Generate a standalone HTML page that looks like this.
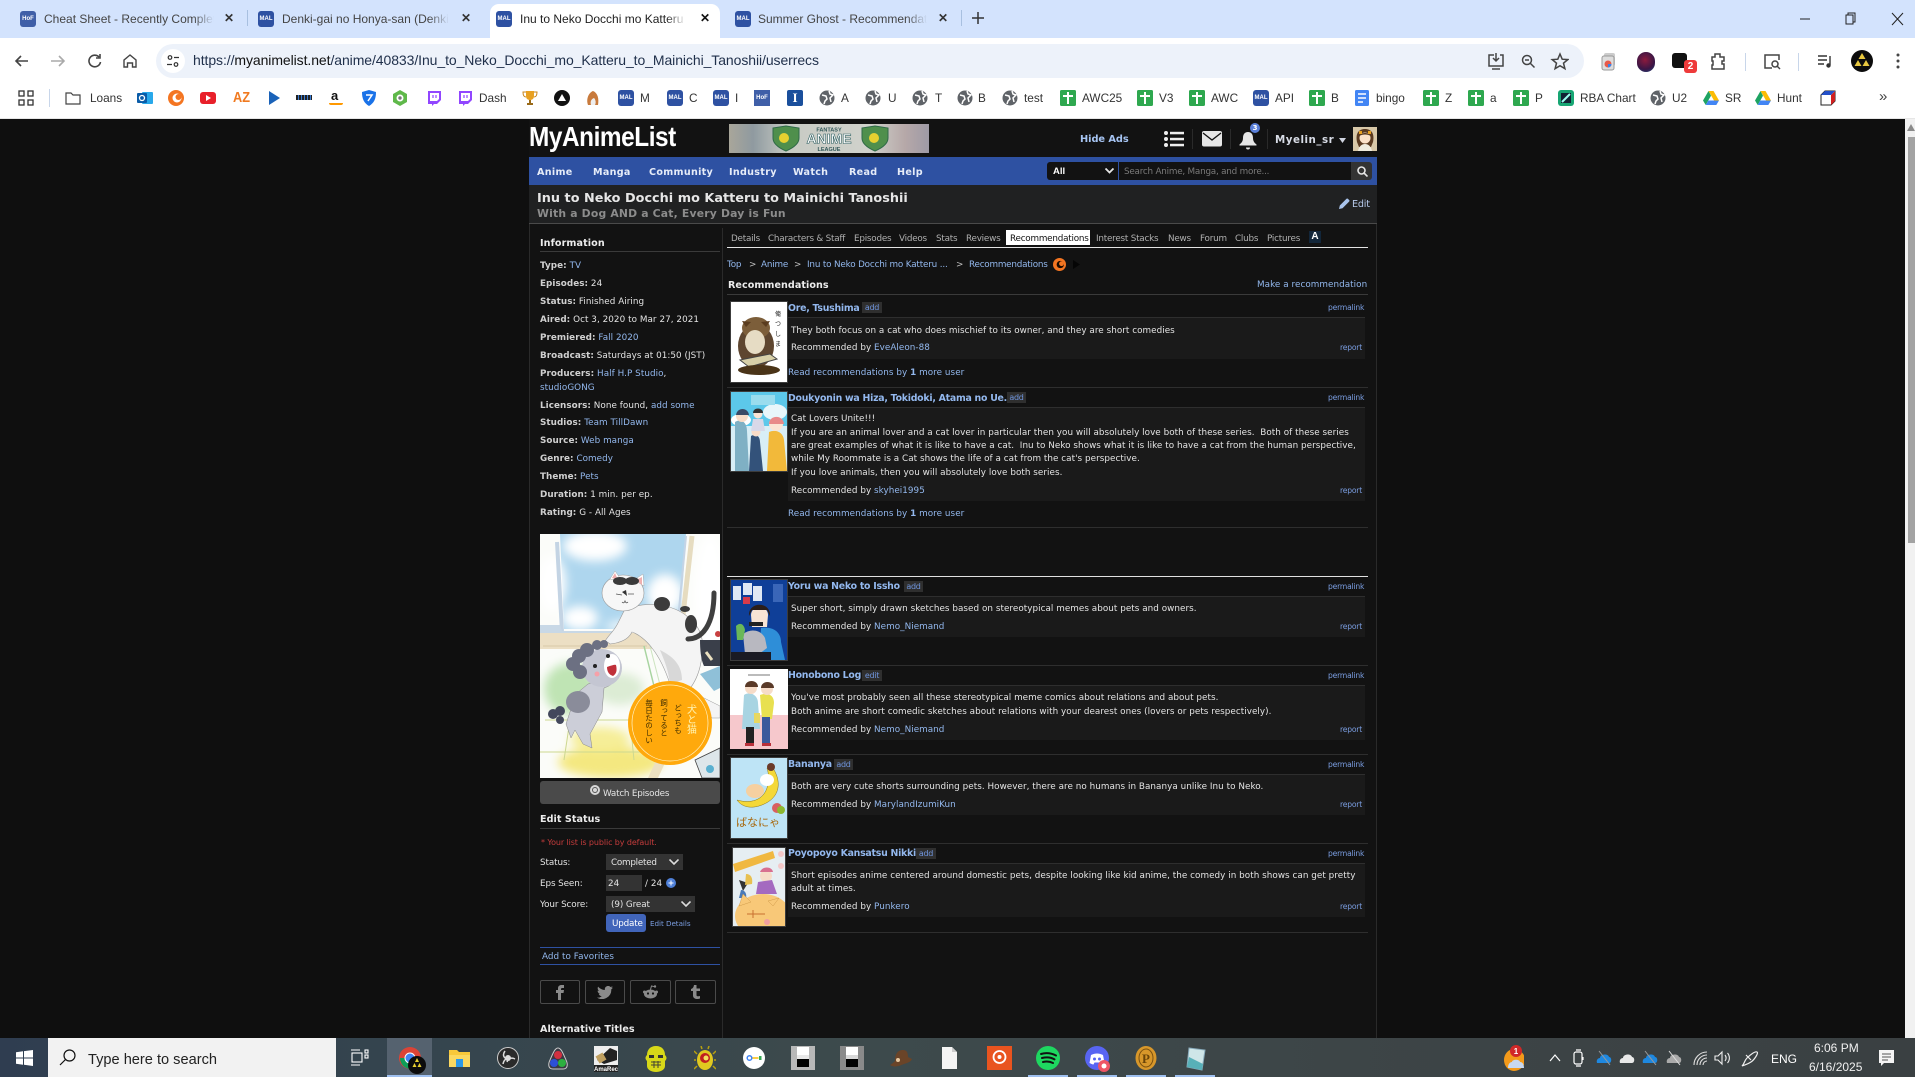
<!DOCTYPE html>
<html><head><meta charset="utf-8"><title>Inu to Neko Docchi mo Katteru to Mainichi Tanoshii - Recommendations</title>
<style>
html,body{margin:0;padding:0;width:1915px;height:1077px;overflow:hidden;background:#101010}
*{box-sizing:border-box}
.a{position:absolute}
.t{position:absolute;white-space:nowrap;line-height:14px;font-family:"DejaVu Sans","Liberation Sans",sans-serif;font-size:8.8px;color:#e4e4e4;letter-spacing:.05px;margin-top:1px}
.c{font-family:"Liberation Sans",sans-serif;letter-spacing:0;margin-top:0}
.l{color:#93b8ee}
.b{font-weight:bold}
.lb{font-weight:bold;color:#d0d0d0}
.tab{font-size:12px;color:#444;overflow:hidden;-webkit-mask-image:linear-gradient(90deg,#000 88%,transparent);mask-image:linear-gradient(90deg,#000 88%,transparent)}
.x{font-size:12px;color:#333;font-weight:bold}
.mal{position:absolute;background:#2e51a2;color:#fff;font:bold 6px/16px "Liberation Sans",sans-serif;width:16px;height:16px;text-align:center;border-radius:3px;letter-spacing:0}
.bk{font-size:11.800px;color:#333;top:91px}
.g{position:absolute;top:90px;width:16px;height:16px}
.sep{position:absolute;left:727px;width:641px;height:1px;background:#2e2e2e}
.box{position:absolute;left:788px;width:577px;background:#1a1a1a}
.ttl{font-weight:bold;font-size:9.400px;color:#93b8ee;left:788px;letter-spacing:-.25px;margin-top:2px}
.tag{position:absolute;height:11px;background:#2f2f2f;color:#6f94dc;font:8px/11px "DejaVu Sans",sans-serif;text-align:center;letter-spacing:-.3px}
.pl{left:1328px;font-size:7.600px;color:#7a9de0;letter-spacing:-.2px}
.rp{left:1340px;font-size:7.600px;color:#7a9de0;letter-spacing:-.2px}
.tx{left:791px;color:#e4e4e4;letter-spacing:.04px}
.tbt{color:#b0b0b0;top:231px;letter-spacing:-.22px}
.bc{letter-spacing:-.17px}
.hd{font-weight:bold;font-size:9.600px;color:#ececec;letter-spacing:.05px;margin-top:2px}
.thumb{position:absolute;overflow:hidden;border:1px solid #3c3c3c}
.sb{position:absolute;top:980px;height:24px;border:1px solid #4a4a4a;border-radius:2px}
.nv{font-weight:bold;font-size:9.600px;color:#e6ecf8;letter-spacing:.3px;top:165px}
</style></head><body>

<!-- chrome tab strip -->
<div class="a" style="left:0;top:0;width:1915px;height:38px;background:#d3e3fd"></div>
<div class="a" style="left:0;top:38px;width:1915px;height:81px;background:#fff"></div>
<div class="a" style="left:490px;top:4px;width:230px;height:34px;background:#fff;border-radius:9px 9px 0 0"></div>
<div class="a" style="left:247px;top:10px;width:1px;height:16px;background:#a8c0e0"></div>
<div class="a" style="left:961px;top:10px;width:1px;height:16px;background:#a8c0e0"></div>

<div class="mal" style="left:20px;top:11px;background:#3f5fa8;font-size:6px">HoF</div>
<div class="t c tab" style="left:44px;top:12px;width:170px">Cheat Sheet - Recently Completed</div>
<div class="t c x" style="left:224px;top:11px">✕</div>
<div class="mal" style="left:258px;top:11px">MAL</div>
<div class="t c tab" style="left:282px;top:12px;width:167px">Denki-gai no Honya-san (Denki-gai</div>
<div class="t c x" style="left:461px;top:11px">✕</div>
<div class="mal" style="left:496px;top:11px">MAL</div>
<div class="t c tab" style="left:520px;top:12px;width:166px;color:#1f1f1f">Inu to Neko Docchi mo Katteru to Mainichi</div>
<div class="t c x" style="left:700px;top:11px;color:#111">✕</div>
<div class="mal" style="left:735px;top:11px">MAL</div>
<div class="t c tab" style="left:758px;top:12px;width:169px">Summer Ghost - Recommendations</div>
<div class="t c x" style="left:938px;top:11px">✕</div>
<svg class="a" style="left:971px;top:11px" width="14" height="14" viewBox="0 0 14 14"><path d="M7 1v12M1 7h12" stroke="#333" stroke-width="1.500"/></svg>
<!-- window controls -->
<svg class="a" style="left:1798px;top:12px" width="106" height="14" viewBox="0 0 106 14" fill="none" stroke="#222" stroke-width="1"><path d="M2 7h10"/><rect x="48" y="3" width="7" height="9"/><path d="M50 3V1h7v9h-2"/><path d="M94 1l11 12M105 1L94 13"/></svg>

<!-- toolbar -->
<svg class="a" style="left:13px;top:52px" width="135" height="18" viewBox="0 0 135 18" fill="none" stroke-width="1.600"><path d="M15 9H3m5-5-5 5 5 5" stroke="#444"/><path d="M38 9h13m-5-5 5 5-5 5" stroke="#aaa"/><path d="M86 5a5.800 5.800 0 1 0 1.500 5M87 2v4h-4" stroke="#444"/><path d="M111 8l6-5 6 5v7h-3.500v-4h-5v4H111z" stroke="#444" stroke-width="1.400"/></svg>
<div class="a" style="left:156px;top:44px;width:1428px;height:34px;background:#edf2fa;border-radius:17px"></div>
<div class="a" style="left:161px;top:49px;width:24px;height:24px;background:#fff;border-radius:12px"></div>
<svg class="a" style="left:166px;top:54px" width="14" height="14" viewBox="0 0 14 14" fill="none" stroke="#333" stroke-width="1.200"><circle cx="4" cy="3.500" r="1.800"/><path d="M8 3.500h5M1 10.500h5"/><circle cx="10" cy="10.500" r="1.800"/></svg>
<div class="t c" style="left:193px;top:53px;font-size:14px;color:#1f2f4a;letter-spacing:-.08px">https://<span style="color:#111">myanimelist.net</span>/anime/40833/Inu_to_Neko_Docchi_mo_Katteru_to_Mainichi_Tanoshii/userrecs</div>
<svg class="a" style="left:1487px;top:52px" width="82" height="20" viewBox="0 0 82 20" fill="none" stroke="#444" stroke-width="1.500"><path d="M7 3H2v11h14V3h-3M9 1v8m-3-3 3 3 3-3M5 17h8"/><circle cx="40" cy="8" r="4.500"/><path d="M43.500 11.500l4 4M38 8h4"/><path d="M73 2l2.200 5.200 5.600.400-4.300 3.600 1.400 5.500-4.900-3-4.900 3 1.400-5.500-4.300-3.600 5.600-.400z"/></svg>
<!-- ext icons -->
<svg class="a" style="left:1600px;top:52px" width="18" height="20" viewBox="0 0 18 20"><rect x="4" y="1" width="11" height="13" rx="2" fill="#ccc"/><rect x="2" y="4" width="12" height="14" rx="2" fill="#ddd" stroke="#999"/><circle cx="8" cy="12" r="3.500" fill="#e8594a"/><path d="M8 12h3.500a3.500 3.500 0 0 1-3.500 3.500z" fill="#3b82e8"/></svg>
<div class="a" style="left:1637px;top:52px;width:18px;height:20px;border-radius:9px;background:radial-gradient(circle at 45% 40%,#8c1a3d,#3a1645 60%,#1b4a86)"></div>
<div class="a" style="left:1672px;top:53px;width:15px;height:15px;background:#111;border-radius:3px"></div>
<div class="a" style="left:1684px;top:60px;width:13px;height:13px;background:#ee3a3a;border-radius:3px;color:#fff;font:bold 10px/13px 'Liberation Sans',sans-serif;text-align:center">2</div>
<svg class="a" style="left:1710px;top:52px" width="16" height="19" viewBox="0 0 16 19" fill="none" stroke="#444" stroke-width="1.500"><path d="M2 5h3V2h5v3h4v4h-2v3h2v5H2v-4h1V9H2z"/></svg>
<div class="a" style="left:1745px;top:53px;width:1px;height:18px;background:#c8d6ea"></div>
<svg class="a" style="left:1763px;top:52px" width="18" height="20" viewBox="0 0 18 20" fill="none" stroke="#444" stroke-width="1.500"><path d="M16 8V3H2v13h7"/><circle cx="12" cy="12" r="3"/><path d="M14 14l3 3"/></svg>
<div class="a" style="left:1798px;top:53px;width:1px;height:18px;background:#c8d6ea"></div>
<svg class="a" style="left:1817px;top:54px" width="16" height="15" viewBox="0 0 16 15" fill="none" stroke="#333" stroke-width="1.400"><path d="M1 2h9M1 6h9M1 10h6M13 2v9"/><circle cx="11.500" cy="11.500" r="1.500" fill="#333"/></svg>
<svg class="a" style="left:1851px;top:50px" width="22" height="22" viewBox="0 0 22 22"><circle cx="11" cy="11" r="11" fill="#0c0c0c"/><path d="M11 3l3.500 6h-7zM7 10l3.500 6h-7zM15 10l3.500 6h-7z" fill="#e8c840"/></svg>
<svg class="a" style="left:1896px;top:53px" width="4" height="16" viewBox="0 0 4 16"><circle cx="2" cy="2" r="1.500" fill="#444"/><circle cx="2" cy="8" r="1.500" fill="#444"/><circle cx="2" cy="14" r="1.500" fill="#444"/></svg>

<!-- bookmarks -->
<svg class="g" style="left:18px" viewBox="0 0 16 16" fill="none" stroke="#333" stroke-width="1.300"><rect x="1" y="1" width="5" height="5"/><rect x="10" y="1" width="5" height="5"/><rect x="1" y="10" width="5" height="5"/><rect x="10" y="10" width="5" height="5"/></svg>
<div class="a" style="left:49px;top:89px;width:1px;height:18px;background:#c8d6ea"></div>
<svg class="g" style="left:65px" viewBox="0 0 16 16" fill="none" stroke="#444" stroke-width="1.200"><path d="M1 3h5l2 2h7v9H1z"/></svg>
<div class="t c bk" style="left:90px">Loans</div>
<svg class="g" style="left:137px" viewBox="0 0 16 16"><rect x="5" y="2" width="11" height="12" rx="1" fill="#28a8ea"/><rect y="3" width="10" height="10" rx="1" fill="#0a5ca8"/><circle cx="5" cy="8" r="2.500" fill="none" stroke="#fff" stroke-width="1.300"/></svg>
<svg class="g" style="left:168px" viewBox="0 0 16 16"><circle cx="8" cy="8" r="8" fill="#f47521"/><circle cx="9" cy="8" r="4.500" fill="#fff"/><circle cx="10.500" cy="7" r="3" fill="#f47521"/></svg>
<svg class="g" style="left:200px" viewBox="0 0 16 16"><rect y="2" width="16" height="12" rx="3" fill="#e8202a"/><path d="M6 5l5 3-5 3z" fill="#fff"/></svg>
<div class="t c b" style="left:233px;top:91px;font-size:15px;color:#f07a20;transform:scaleX(.85);transform-origin:left">AZ</div>
<svg class="g" style="left:266px" viewBox="0 0 16 16"><path d="M3 1l11 7-11 7z" fill="#1a62b8"/></svg>
<div class="a" style="left:296px;top:95px;width:16px;height:5px;background:repeating-linear-gradient(90deg,#222 0 2px,#3b7bd0 2px 3px)"></div>
<div class="t c b" style="left:331px;top:89px;font-size:13px;color:#111">a</div>
<div class="a" style="left:329px;top:103px;width:14px;height:2px;background:#f90;border-radius:0 0 8px 8px"></div>
<svg class="g" style="left:361px" viewBox="0 0 16 16"><path d="M8 0l7 2c0 7-2 11-7 14C3 13 1 9 1 2z" fill="#1a72e8"/><path d="M5 5h6L7 11" fill="none" stroke="#fff" stroke-width="1.500"/></svg>
<svg class="g" style="left:392px" viewBox="0 0 16 16"><path d="M8 0l7 4v8l-7 4-7-4V4z" fill="#5fb84a"/><circle cx="8" cy="8" r="3.500" fill="#fff"/><circle cx="8" cy="8" r="1.700" fill="#777"/></svg>
<svg class="g" style="left:426px" viewBox="0 0 16 16"><path d="M2 1h13v9l-4 4H8l-2 2v-2H2z" fill="#9146ff"/><path d="M4 3h9v6l-2 2H4z" fill="#fff"/><path d="M7 5v3M10 5v3" stroke="#9146ff" stroke-width="1.200"/></svg>
<svg class="g" style="left:457px" viewBox="0 0 16 16"><path d="M2 1h13v9l-4 4H8l-2 2v-2H2z" fill="#9146ff"/><path d="M4 3h9v6l-2 2H4z" fill="#fff"/><path d="M7 5v3M10 5v3" stroke="#9146ff" stroke-width="1.200"/></svg>
<div class="t c bk" style="left:479px">Dash</div>
<svg class="g" style="left:522px" viewBox="0 0 16 16"><path d="M4 1h8v5c0 3-2 4-4 4S4 9 4 6z" fill="#e8a020"/><path d="M4 2H1c0 3 1 5 3 5M12 2h3c0 3-1 5-3 5" fill="none" stroke="#c8851a"/><path d="M7 10h2v3h2v2H5v-2h2z" fill="#9a6a18"/></svg>
<svg class="g" style="left:554px" viewBox="0 0 16 16"><circle cx="8" cy="8" r="8" fill="#111"/><path d="M8 4l4 7H4z" fill="#fff"/></svg>
<svg class="g" style="left:585px" viewBox="0 0 16 16"><path d="M3 15c-2-5 0-12 5-14 5 2 6 8 5 14z" fill="#c87a3c"/><path d="M6 15c-1-3 0-6 3-7 2 2 2 5 1 7z" fill="#eee"/></svg>
<div class="mal" style="left:618px;top:90px">MAL</div><div class="t c bk" style="left:640px">M</div>
<div class="mal" style="left:667px;top:90px">MAL</div><div class="t c bk" style="left:689px">C</div>
<div class="mal" style="left:713px;top:90px">MAL</div><div class="t c bk" style="left:735px">I</div>
<div class="mal" style="left:754px;top:90px;background:#3f5fa8;border-radius:0">HoF</div>
<div class="a" style="left:787px;top:90px;width:16px;height:16px;background:#1a4f9c;color:#fff;font:bold 13px/16px 'Liberation Serif',serif;text-align:center;border-radius:2px">I</div>
<svg class="g" style="left:819px" viewBox="0 0 16 16"><circle cx="8" cy="8" r="7.500" fill="#5f6368"/><path d="M3 5l4 1 1 3-2 2-1 3M10 1l1 3 3 1-3 3 1 4" stroke="#fff" stroke-width="1.500" fill="none"/></svg><div class="t c bk" style="left:841px">A</div>
<svg class="g" style="left:865px" viewBox="0 0 16 16"><circle cx="8" cy="8" r="7.500" fill="#5f6368"/><path d="M3 5l4 1 1 3-2 2-1 3M10 1l1 3 3 1-3 3 1 4" stroke="#fff" stroke-width="1.500" fill="none"/></svg><div class="t c bk" style="left:888px">U</div>
<svg class="g" style="left:912px" viewBox="0 0 16 16"><circle cx="8" cy="8" r="7.500" fill="#5f6368"/><path d="M3 5l4 1 1 3-2 2-1 3M10 1l1 3 3 1-3 3 1 4" stroke="#fff" stroke-width="1.500" fill="none"/></svg><div class="t c bk" style="left:935px">T</div>
<svg class="g" style="left:957px" viewBox="0 0 16 16"><circle cx="8" cy="8" r="7.500" fill="#5f6368"/><path d="M3 5l4 1 1 3-2 2-1 3M10 1l1 3 3 1-3 3 1 4" stroke="#fff" stroke-width="1.500" fill="none"/></svg><div class="t c bk" style="left:978px">B</div>
<svg class="g" style="left:1002px" viewBox="0 0 16 16"><circle cx="8" cy="8" r="7.500" fill="#5f6368"/><path d="M3 5l4 1 1 3-2 2-1 3M10 1l1 3 3 1-3 3 1 4" stroke="#fff" stroke-width="1.500" fill="none"/></svg><div class="t c bk" style="left:1024px">test</div>
<svg class="g" style="left:1060px" viewBox="0 0 16 16"><rect width="16" height="16" rx="1.500" fill="#2ea84f"/><path d="M8 2v12M3 6h10" stroke="#fff" stroke-width="2"/></svg><div class="t c bk" style="left:1082px">AWC25</div>
<svg class="g" style="left:1137px" viewBox="0 0 16 16"><rect width="16" height="16" rx="1.500" fill="#2ea84f"/><path d="M8 2v12M3 6h10" stroke="#fff" stroke-width="2"/></svg><div class="t c bk" style="left:1159px">V3</div>
<svg class="g" style="left:1189px" viewBox="0 0 16 16"><rect width="16" height="16" rx="1.500" fill="#2ea84f"/><path d="M8 2v12M3 6h10" stroke="#fff" stroke-width="2"/></svg><div class="t c bk" style="left:1211px">AWC</div>
<div class="mal" style="left:1253px;top:90px">MAL</div><div class="t c bk" style="left:1275px">API</div>
<svg class="g" style="left:1309px" viewBox="0 0 16 16"><rect width="16" height="16" rx="1.500" fill="#2ea84f"/><path d="M8 2v12M3 6h10" stroke="#fff" stroke-width="2"/></svg><div class="t c bk" style="left:1331px">B</div>
<svg class="g" style="left:1354px" viewBox="0 0 16 16"><rect x="1" width="14" height="16" rx="1.500" fill="#4285f4"/><path d="M4 4h8M4 8h8M4 12h5" stroke="#fff" stroke-width="1.500"/></svg><div class="t c bk" style="left:1376px">bingo</div>
<svg class="g" style="left:1423px" viewBox="0 0 16 16"><rect width="16" height="16" rx="1.500" fill="#2ea84f"/><path d="M8 2v12M3 6h10" stroke="#fff" stroke-width="2"/></svg><div class="t c bk" style="left:1445px">Z</div>
<svg class="g" style="left:1468px" viewBox="0 0 16 16"><rect width="16" height="16" rx="1.500" fill="#2ea84f"/><path d="M8 2v12M3 6h10" stroke="#fff" stroke-width="2"/></svg><div class="t c bk" style="left:1490px">a</div>
<svg class="g" style="left:1513px" viewBox="0 0 16 16"><rect width="16" height="16" rx="1.500" fill="#2ea84f"/><path d="M8 2v12M3 6h10" stroke="#fff" stroke-width="2"/></svg><div class="t c bk" style="left:1535px">P</div>
<svg class="g" style="left:1558px" viewBox="0 0 16 16"><rect width="16" height="16" rx="3" fill="#17a673"/><rect x="3" y="3" width="10" height="10" fill="#123"/><path d="M4 12L12 4" stroke="#9fe" stroke-width="2"/></svg><div class="t c bk" style="left:1580px">RBA Chart</div>
<svg class="g" style="left:1650px" viewBox="0 0 16 16"><circle cx="8" cy="8" r="7.500" fill="#5f6368"/><path d="M3 5l4 1 1 3-2 2-1 3M10 1l1 3 3 1-3 3 1 4" stroke="#fff" stroke-width="1.500" fill="none"/></svg><div class="t c bk" style="left:1672px">U2</div>
<svg class="g" style="left:1703px" viewBox="0 0 16 16"><path d="M5.500 1h5L16 10.500h-5z" fill="#fbbc04"/><path d="M5.500 1L0 10.500 2.700 15 8 5.700z" fill="#1ea362"/><path d="M2.700 15h10.600L16 10.500H5.300z" fill="#4285f4"/></svg><div class="t c bk" style="left:1725px">SR</div>
<svg class="g" style="left:1755px" viewBox="0 0 16 16"><path d="M5.500 1h5L16 10.500h-5z" fill="#fbbc04"/><path d="M5.500 1L0 10.500 2.700 15 8 5.700z" fill="#1ea362"/><path d="M2.700 15h10.600L16 10.500H5.300z" fill="#4285f4"/></svg><div class="t c bk" style="left:1777px">Hunt</div>
<svg class="g" style="left:1820px" viewBox="0 0 16 16"><path d="M1 5l4-4h10v10l-4 4H1z" fill="#fff" stroke="#222"/><path d="M11 5v10l4-4V1z" fill="#d02020"/><path d="M1 5h10l4-4H5z" fill="#2450c8"/></svg>
<div class="t c" style="left:1879px;top:90px;font-size:15px;color:#444">»</div>

<!-- page -->
<div class="a" style="left:0;top:118px;width:1915px;height:1px;background:#e6e6e6"></div>
<div class="a" style="left:0;top:119px;width:1905px;height:919px;background:#0f0f0f"></div>
<div class="a" style="left:529px;top:119px;width:848px;height:919px;background:#121212"></div>
<div class="a" style="left:529px;top:224px;width:1px;height:814px;background:#2a2a2a"></div>
<div class="a" style="left:1376px;top:224px;width:1px;height:814px;background:#2a2a2a"></div>
<div class="a" style="left:722px;top:228px;width:1px;height:810px;background:#2a2a2a"></div>
<!-- scrollbar -->
<div class="a" style="left:1905px;top:119px;width:10px;height:919px;background:#f1f1f1"></div>
<svg class="a" style="left:1907px;top:124px" width="8" height="7"><path d="M4 0l4 7H0z" fill="#8a8a8a"/></svg>
<div class="a" style="left:1908px;top:137px;width:7px;height:406px;background:#a3a3a3"></div>

<!-- header -->
<div class="t c b" style="left:529px;top:121px;font-size:28px;line-height:32px;color:#fff;letter-spacing:-.5px;transform:scaleX(.87);transform-origin:left">MyAnimeList</div>
<svg class="a" style="left:729px;top:124px" width="200" height="29" viewBox="0 0 200 29"><defs><linearGradient id="fal" x1="0" x2="1"><stop offset="0" stop-color="#a9a69a"/><stop offset=".12" stop-color="#8f9aa0"/><stop offset=".3" stop-color="#c8cbc4"/><stop offset=".7" stop-color="#d0d2cc"/><stop offset=".88" stop-color="#b6a8a8"/><stop offset="1" stop-color="#9e9aa6"/></linearGradient></defs><rect width="200" height="29" fill="url(#fal)"/><path d="M44 4l13-2 13 2v10c0 6-6 10-13 13-7-3-13-7-13-13z" fill="#4f8f4c" stroke="#2f6a48"/><circle cx="55" cy="14" r="5" fill="#e8d030"/><path d="M133 4l13-2 13 2v10c0 6-6 10-13 13-7-3-13-7-13-13z" fill="#4f8f4c" stroke="#2f6a48"/><circle cx="145" cy="14" r="5" fill="#e8d030"/><text x="100" y="7.500" font-size="5.500" font-family="Liberation Sans" text-anchor="middle" fill="#33595a" font-weight="bold">FANTASY</text><text x="100" y="19.500" font-size="14" font-family="Liberation Sans" text-anchor="middle" fill="#fff" stroke="#2f5f60" stroke-width=".6" font-weight="bold">ANIME</text><text x="100" y="27" font-size="5.500" font-family="Liberation Sans" text-anchor="middle" fill="#33595a" font-weight="bold">LEAGUE</text></svg>
<div class="t b" style="left:1080px;top:132px;font-size:9.800px;color:#a6c4f2;letter-spacing:-.05px">Hide Ads</div>
<svg class="a" style="left:1164px;top:131px" width="20" height="16" viewBox="0 0 20 16" fill="#eee"><circle cx="2" cy="2" r="2"/><circle cx="2" cy="8" r="2"/><circle cx="2" cy="14" r="2"/><rect x="6" y="0.800" width="14" height="2.500"/><rect x="6" y="6.800" width="14" height="2.500"/><rect x="6" y="12.800" width="14" height="2.500"/></svg>
<div class="a" style="left:1192px;top:129px;width:1px;height:20px;background:#2a2a2a"></div>
<svg class="a" style="left:1202px;top:131px" width="20" height="16" viewBox="0 0 20 16"><rect width="20" height="15.500" rx="2" fill="#e6e6e6"/><path d="M1 2l9 7 9-7" fill="none" stroke="#121212" stroke-width="1.300"/></svg>
<div class="a" style="left:1230px;top:129px;width:1px;height:20px;background:#2a2a2a"></div>
<svg class="a" style="left:1239px;top:131px" width="18" height="19" viewBox="0 0 18 19" fill="#e6e6e6"><path d="M9 1c3.500 0 5 2.500 5 6 0 3 1.500 5 3.500 6.500v1H.5v-1C2.500 12 4 10 4 7c0-3.500 1.500-6 5-6z"/><path d="M7 16.500h4a2 2 0 0 1-4 0z"/></svg>
<div class="a" style="left:1250px;top:123px;width:10px;height:10px;background:#5a7fd8;border-radius:5px;color:#fff;font:bold 7px/10px 'DejaVu Sans',sans-serif;text-align:center">3</div>
<div class="a" style="left:1267px;top:129px;width:1px;height:20px;background:#2a2a2a"></div>
<div class="t b" style="left:1275px;top:132px;font-size:10.300px;color:#d8dce6;letter-spacing:.5px">Myelin_sr</div>
<svg class="a" style="left:1339px;top:138px" width="7" height="5"><path d="M0 0h7L3.500 5z" fill="#d0d4e0"/></svg>
<svg class="a" style="left:1353px;top:127px" width="24" height="24" viewBox="0 0 24 24"><rect width="24" height="24" fill="#d8c8a8"/><path d="M4 15C2 5 7 2 12 2s10 3 8 13l-2 5H6z" fill="#5a3a20"/><circle cx="12" cy="11" r="5.500" fill="#fbe0c8"/><path d="M6 9c2-4 10-4 12 0-4-2-8-2-12 0z" fill="#5a3a20"/><path d="M5 24c1-5 4-7 7-7s6 2 7 7z" fill="#f0ece0"/><rect x="6" y="4" width="3" height="3" fill="#e8a020"/><rect x="15" y="4" width="3" height="3" fill="#e8a020"/></svg>

<!-- nav -->
<div class="a" style="left:529px;top:157px;width:848px;height:28px;background:#2e51a2"></div>
<div class="t nv" style="left:537px">Anime</div>
<div class="t nv" style="left:593px">Manga</div>
<div class="t nv" style="left:649px">Community</div>
<div class="t nv" style="left:729px">Industry</div>
<div class="t nv" style="left:793px">Watch</div>
<div class="t nv" style="left:849px">Read</div>
<div class="t nv" style="left:897px">Help</div>
<div class="a" style="left:1047px;top:162px;width:71px;height:18px;background:#121212;border-radius:3px 0 0 3px"></div>
<div class="t c" style="left:1053px;top:164.500px;font-size:9.500px;color:#fff;font-weight:bold">All</div>
<svg class="a" style="left:1105px;top:168px" width="9" height="6"><path d="M.5.500L4.500 4.500 8.500.500" fill="none" stroke="#e6e6e6" stroke-width="1.800"/></svg>
<div class="a" style="left:1119px;top:162px;width:232px;height:18px;background:#121212"></div>
<div class="t" style="left:1124px;top:163.500px;color:#7a7a7a;letter-spacing:-.22px">Search Anime, Manga, and more...</div>
<div class="a" style="left:1351px;top:162px;width:21px;height:18px;background:#333;border-radius:0 3px 3px 0"></div>
<svg class="a" style="left:1357px;top:166px" width="11" height="11" fill="none" stroke="#e6e6e6" stroke-width="1.600"><circle cx="4.500" cy="4.500" r="3.500"/><path d="M7 7l3.500 3.500"/></svg>

<!-- title -->
<div class="a" style="left:529px;top:185px;width:848px;height:38px;background:#202122"></div>
<div class="a" style="left:529px;top:223px;width:848px;height:1px;background:#4a4a4a"></div>
<div class="t b" style="left:537px;top:191px;font-size:12.800px;color:#e6e6e6;letter-spacing:.03px">Inu to Neko Docchi mo Katteru to Mainichi Tanoshii</div>
<div class="t b" style="left:537px;top:206px;font-size:10.800px;color:#8c8c8c;letter-spacing:.2px">With a Dog AND a Cat, Every Day is Fun</div>
<svg class="a" style="left:1339px;top:198px" width="11" height="11" viewBox="0 0 11 11"><path d="M0 11l.8-3.500L7.500.8a1 1 0 0 1 1.400 0l1.300 1.300a1 1 0 0 1 0 1.400L3.500 10.200z" fill="#a9c4ec"/></svg>
<div class="t" style="left:1352px;top:197px;font-size:9.600px;color:#b6c9ea;letter-spacing:-.2px">Edit</div>

<!-- left column -->
<div class="t hd" style="left:540px;top:234.500px;letter-spacing:.1px">Information</div>
<div class="a" style="left:540px;top:251px;width:180px;height:1px;background:#3a3a3a"></div>
<div class="t" style="left:540px;top:258px"><span class="lb">Type:</span> <span class="l">TV</span></div>
<div class="t" style="left:540px;top:276px"><span class="lb">Episodes:</span> 24</div>
<div class="t" style="left:540px;top:294px"><span class="lb">Status:</span> Finished Airing</div>
<div class="t" style="left:540px;top:311.500px"><span class="lb">Aired:</span> Oct 3, 2020 to Mar 27, 2021</div>
<div class="t" style="left:540px;top:329.500px"><span class="lb">Premiered:</span> <span class="l">Fall 2020</span></div>
<div class="t" style="left:540px;top:347.500px"><span class="lb">Broadcast:</span> Saturdays at 01:50 (JST)</div>
<div class="t" style="left:540px;top:365.500px"><span class="lb">Producers:</span> <span class="l">Half H.P Studio</span>,</div>
<div class="t l" style="left:540px;top:379.500px">studioGONG</div>
<div class="t" style="left:540px;top:397.500px"><span class="lb">Licensors:</span> None found, <span class="l">add some</span></div>
<div class="t" style="left:540px;top:415px"><span class="lb">Studios:</span> <span class="l">Team TillDawn</span></div>
<div class="t" style="left:540px;top:433px"><span class="lb">Source:</span> <span class="l">Web manga</span></div>
<div class="t" style="left:540px;top:451px"><span class="lb">Genre:</span> <span class="l">Comedy</span></div>
<div class="t" style="left:540px;top:469px"><span class="lb">Theme:</span> <span class="l">Pets</span></div>
<div class="t" style="left:540px;top:487px"><span class="lb">Duration:</span> 1 min. per ep.</div>
<div class="t" style="left:540px;top:505px"><span class="lb">Rating:</span> G - All Ages</div>

<!-- cover -->
<svg class="a" style="left:540px;top:534px" width="180" height="244" viewBox="0 0 180 244">
<defs><filter id="bl"><feGaussianBlur stdDeviation="5"/></filter><filter id="bl2"><feGaussianBlur stdDeviation="1.500"/></filter></defs>
<rect width="180" height="244" fill="#fbfcf9"/>
<path d="M20 0H146L140 95H24z" fill="#aed6ee"/>
<g filter="url(#bl)" fill="#fff"><ellipse cx="55" cy="12" rx="32" ry="15"/><ellipse cx="40" cy="84" rx="18" ry="12"/><ellipse cx="125" cy="60" rx="18" ry="20"/><ellipse cx="12" cy="50" rx="14" ry="28"/><ellipse cx="170" cy="60" rx="16" ry="60"/><ellipse cx="95" cy="92" rx="30" ry="5"/></g>
<path d="M17 8l5 90" stroke="#c4d4e4" stroke-width="4"/><path d="M152 2l-10 88" stroke="#e6dcc0" stroke-width="5"/><path d="M146 2l-8 84" stroke="#c4d4e6" stroke-width="2"/>
<path d="M0 91h20l2 6h58v3H0z" fill="#c8d8e6"/>
<path d="M0 99h112v16H0z" fill="#ecdfc4"/><path d="M3 112h104" stroke="#d8c8a8"/>
<g filter="url(#bl)"><ellipse cx="30" cy="155" rx="26" ry="26" fill="#bfe4b4"/><ellipse cx="80" cy="155" rx="24" ry="16" fill="#dcecd4"/><ellipse cx="70" cy="228" rx="52" ry="16" fill="#f4e880"/><ellipse cx="60" cy="205" rx="30" ry="12" fill="#f6ee98"/></g>
<path d="M104 112l20 80" stroke="#a8d4a0" stroke-width="1.500" fill="none"/><path d="M110 112l18 70" stroke="#cce4c0"/>
<path d="M5 186h110M0 218h110M30 186l-6 40M90 186l4 40" stroke="#cdd890"/>
<path d="M120 218l-12 26h10l12-26z" fill="#ece0c0"/>
<!-- cat -->
<path d="M130 150c-4-12-10-26-18-36-6-8-14-14-20-16-3 6-8 9-16 11l-6 1c-2-2-4-2-6-1 4-8 9-10 14-20l6-12c22-12 50-6 64 6 18 14 16 32 12 50-2 8-6 18-14 26z" fill="#f4f4f4" stroke="#999" stroke-width=".6"/>
<path d="M130 150c-2-16-6-24-10-34 12 6 22 14 22 30z" fill="#d8d8d8"/>
<ellipse cx="83" cy="59" rx="21" ry="18" fill="#f7f7f7" stroke="#999" stroke-width=".6"/>
<path d="M70 45l5-8 7 10zM94 46l9-6 1 12z" fill="#fff" stroke="#aaa" stroke-width=".5"/><path d="M72 44l3-5 3 7zM96 46l6-3v8z" fill="#f0b0b0"/>
<ellipse cx="80" cy="47" rx="7" ry="4" fill="#3a3a3a"/><ellipse cx="92" cy="47" rx="7" ry="4" fill="#3a3a3a"/>
<path d="M76 60l6 1M88 60l6 0M82 68q2 2 3-1 1 3 3 1" stroke="#555" fill="none" stroke-width=".8"/><path d="M82 58l4-2 1 6z" fill="#333"/>
<ellipse cx="122" cy="70" rx="8" ry="7" fill="#3c3c3c"/><ellipse cx="151" cy="90" rx="6" ry="9" fill="#3c3c3c"/><ellipse cx="145" cy="75" rx="5" ry="3" fill="#3c3c3c"/>
<path d="M148 105c14 0 26-14 26-46" stroke="#3f3f3f" stroke-width="5" fill="none" stroke-linecap="round"/>
<!-- mug and book -->
<path d="M160 106h20v26h-16c-3-6-4-16-4-26z" fill="#3a3f4a"/><path d="M166 118l6 8" stroke="#eae0c0" stroke-width="3"/><circle cx="178" cy="100" r="3" fill="#c84040"/>
<path d="M160 140l20-8v22l-6 3z" fill="#8fc0d8"/><path d="M156 160l24 12v12l-8 0-16-18z" fill="#f4f4f4" stroke="#999" stroke-width=".5"/>
<path d="M155 226l25-12v30h-18z" fill="#dde6ea" stroke="#444" stroke-width=".8"/><circle cx="170" cy="235" r="4" fill="#5ab0d0"/>
<!-- dog -->
<path d="M48 150l-12 10-10 30 5 14 4-8 8 14 9 4-2-14 12-22 2-24c6-2 12-6 16-16l-4-4-12 12z" fill="#ccced8" stroke="#888" stroke-width=".5"/>
<ellipse cx="62" cy="134" rx="20" ry="19" fill="#c4c6d2"/>
<g fill="#6c7082"><circle cx="39" cy="122" r="7"/><circle cx="33" cy="130" r="7"/><circle cx="40" cy="138" r="7"/><circle cx="47" cy="116" r="7"/><circle cx="57" cy="111" r="5"/><circle cx="64" cy="110" r="4"/></g>
<ellipse cx="38" cy="168" rx="12" ry="11" fill="#8a8c9a"/><g fill="#43485c"><circle cx="13" cy="180" r="5"/><circle cx="20" cy="177" r="5"/><circle cx="20" cy="186" r="4"/></g>
<ellipse cx="72" cy="132" rx="8" ry="12" fill="#fff"/>
<path d="M67 133q8-3 9-2 2 8-3 11-6-2-6-9z" fill="#c0303a"/>
<circle cx="55" cy="132" r="2" fill="#222"/><circle cx="68" cy="122" r="2" fill="#222"/><circle cx="57" cy="140" r="2.500" fill="#f6a0a8"/>
<!-- orange -->
<circle cx="130" cy="189" r="42" fill="#ffa90c"/><circle cx="130" cy="189" r="38" fill="none" stroke="#fff2c4" stroke-width=".7"/>
<g font-family="'Noto Sans CJK JP','WenQuanYi Zen Hei',sans-serif" style="writing-mode:vertical-rl"><text x="152" y="170" font-size="10" fill="#fff3b0">犬と猫</text><text x="138" y="170" font-size="7.500" fill="#3a2a00">どっちも</text><text x="124" y="165" font-size="7.500" fill="#3a2a00">飼ってると</text><text x="109" y="165" font-size="7.500" fill="#3a2a00">毎日たのしい</text></g>
</svg>

<div class="a" style="left:540px;top:781px;width:180px;height:23px;background:#4a4a4a;border-radius:3px"></div>
<svg class="a" style="left:590px;top:785px" width="10" height="10"><circle cx="5" cy="5" r="5" fill="#d8d8d8"/><circle cx="5" cy="5" r="2.500" fill="none" stroke="#555"/></svg>
<div class="t" style="left:603px;top:785.500px;color:#e4e4e4;letter-spacing:-.22px">Watch Episodes</div>

<div class="t hd" style="left:540px;top:810.500px">Edit Status</div>
<div class="a" style="left:540px;top:828px;width:180px;height:1px;background:#3a3a3a"></div>
<div class="t" style="left:541px;top:835px;font-size:8px;color:#c43c3c;letter-spacing:-.1px">* Your list is public by default.</div>
<div class="t" style="left:540px;top:854.500px;letter-spacing:-.1px">Status:</div>
<div class="a" style="left:606px;top:854px;width:77px;height:16px;background:#333"></div>
<div class="t" style="left:611px;top:854.500px;letter-spacing:-.25px">Completed</div>
<svg class="a" style="left:669px;top:859px" width="10" height="6"><path d="M.5.500L5 5 9.500.500" fill="none" stroke="#ddd" stroke-width="1.600"/></svg>
<div class="t" style="left:540px;top:875.500px;letter-spacing:-.1px">Eps Seen:</div>
<div class="a" style="left:606px;top:875px;width:36px;height:16px;background:#333"></div>
<div class="t" style="left:608px;top:875.500px">24</div>
<div class="t" style="left:645px;top:876px">/ 24</div>
<svg class="a" style="left:666px;top:878px" width="10" height="10"><circle cx="5" cy="5" r="5" fill="#4f80d8"/><path d="M5 2.500v5M2.500 5h5" stroke="#fff"/></svg>
<div class="t" style="left:540px;top:896.500px;letter-spacing:-.1px">Your Score:</div>
<div class="a" style="left:606px;top:896px;width:89px;height:16px;background:#333"></div>
<div class="t" style="left:611px;top:896.500px;letter-spacing:-.1px">(9) Great</div>
<svg class="a" style="left:681px;top:901px" width="10" height="6"><path d="M.5.500L5 5 9.500.500" fill="none" stroke="#ddd" stroke-width="1.600"/></svg>
<div class="a" style="left:606px;top:914px;width:40px;height:18px;background:#4165ba;border-radius:3px"></div>
<div class="t" style="left:612px;top:915.500px;color:#fff;letter-spacing:-.2px">Update</div>
<div class="t" style="left:650px;top:915.500px;font-size:7.200px;color:#7a9de0;letter-spacing:-.05px">Edit Details</div>
<div class="a" style="left:540px;top:947px;width:180px;height:1px;background:#2e51a2"></div>
<div class="t l" style="left:542px;top:948.500px">Add to Favorites</div>
<div class="a" style="left:540px;top:964px;width:180px;height:1px;background:#2e51a2"></div>
<div class="sb" style="left:540px;width:40px"></div><div class="sb" style="left:585px;width:40px"></div><div class="sb" style="left:630px;width:41px"></div><div class="sb" style="left:675px;width:41px"></div>
<svg class="a" style="left:555px;top:985px" width="10" height="15" viewBox="0 0 10 15"><path d="M3 15V8H1V5h2V3.500C3 1 4.500 0 6.500 0H9v3H7.500C6.500 3 6 3.300 6 4.200V5h3l-.5 3H6v7z" fill="#8a8a8a"/></svg>
<svg class="a" style="left:597px;top:986px" width="16" height="13" viewBox="0 0 16 13"><path d="M16 1.500c-.6.300-1.200.500-1.900.500.700-.4 1.200-1 1.400-1.800-.6.400-1.300.700-2 .8A3.300 3.300 0 0 0 7.900 4C5.200 3.900 2.800 2.600 1.100.6.300 2.100.700 4 2.100 5c-.5 0-1-.2-1.500-.4 0 1.600 1.100 3 2.600 3.300-.5.100-1 .1-1.500 0 .4 1.300 1.600 2.300 3.100 2.300A6.600 6.600 0 0 1 0 11.600 9.300 9.300 0 0 0 14.300 3.300c.7-.5 1.300-1.100 1.700-1.800z" fill="#8a8a8a"/></svg>
<svg class="a" style="left:643px;top:985px" width="15" height="14" viewBox="0 0 15 14"><ellipse cx="7.500" cy="9" rx="6.500" ry="4.500" fill="#8a8a8a"/><circle cx="1.500" cy="7" r="1.500" fill="#8a8a8a"/><circle cx="13.500" cy="7" r="1.500" fill="#8a8a8a"/><circle cx="5" cy="8.500" r="1.100" fill="#121212"/><circle cx="10" cy="8.500" r="1.100" fill="#121212"/><path d="M7.500 4.500L8.500 1l3 .7" stroke="#8a8a8a" fill="none"/><circle cx="12" cy="1.500" r="1.200" fill="#8a8a8a"/></svg>
<svg class="a" style="left:691px;top:985px" width="9" height="14" viewBox="0 0 9 14"><path d="M3 0h2.500v3.500H9V6H5.500v4c0 1.300 1 1.600 3.500 1v2.500C4.500 15 2 13 2 10.500V6H0V4C1.800 3.500 2.800 2 3 0z" fill="#8a8a8a"/></svg>
<div class="t hd" style="left:540px;top:1021px">Alternative Titles</div>

<!-- right tabs -->
<div class="t tbt" style="left:731px">Details</div>
<div class="t tbt" style="left:768px">Characters &amp; Staff</div>
<div class="t tbt" style="left:854px">Episodes</div>
<div class="t tbt" style="left:899px">Videos</div>
<div class="t tbt" style="left:936px">Stats</div>
<div class="t tbt" style="left:966px">Reviews</div>
<div class="a" style="left:1006px;top:230px;width:84px;height:15px;background:#fff"></div>
<div class="t" style="left:1010px;top:230.500px;color:#111;letter-spacing:-.22px">Recommendations</div>
<div class="t tbt" style="left:1096px">Interest Stacks</div>
<div class="t tbt" style="left:1168px">News</div>
<div class="t tbt" style="left:1200px">Forum</div>
<div class="t tbt" style="left:1235px">Clubs</div>
<div class="t tbt" style="left:1267px">Pictures</div>
<div class="a" style="left:1309px;top:231px;width:12px;height:12px;background:#12263a;color:#fff;font:bold 10px/12px 'Liberation Sans',sans-serif;text-align:center">A</div>
<div class="a" style="left:727px;top:247px;width:641px;height:1px;background:#e4e4e4"></div>
<!-- breadcrumb -->
<div class="t l bc" style="left:727px;top:257px">Top</div><div class="t bc" style="left:749px;top:257px;color:#c0c0c0">&gt;</div>
<div class="t l bc" style="left:761px;top:257px">Anime</div><div class="t bc" style="left:794px;top:257px;color:#c0c0c0">&gt;</div>
<div class="t l bc" style="left:807px;top:257px">Inu to Neko Docchi mo Katteru ...</div><div class="t bc" style="left:956px;top:257px;color:#c0c0c0">&gt;</div>
<div class="t l bc" style="left:969px;top:257px;letter-spacing:-.22px">Recommendations</div>
<svg class="a" style="left:1053px;top:258px" width="13" height="13" viewBox="0 0 16 16"><circle cx="8" cy="8" r="8" fill="#f47521"/><circle cx="9" cy="8" r="4.500" fill="#1a0a00"/><circle cx="10.500" cy="7" r="3" fill="#f47521"/></svg>
<svg class="a" style="left:1073px;top:260px" width="7" height="9"><path d="M0 0l7 4.500L0 9z" fill="#050505"/></svg>
<div class="t hd" style="left:728px;top:276.500px">Recommendations</div>
<div class="t l" style="left:1257px;top:277px">Make a recommendation</div>
<div class="sep" style="top:294px;background:#3a3a3a"></div>

<!-- rec 1 -->
<div class="thumb" style="left:730px;top:301px;width:58px;height:82px;background:#fff"><svg width="56" height="80" viewBox="0 0 56 80"><ellipse cx="25" cy="44" rx="18" ry="22" fill="#5e4630"/><ellipse cx="25" cy="26" rx="14" ry="11" fill="#7c5e3a"/><ellipse cx="24" cy="40" rx="10" ry="12" fill="#e6dcc4"/><path d="M11 19l4 6 5-5zM39 19l-4 6-5-5z" fill="#5a3c1e"/><path d="M9 58l30-6 7 5-28 8z" fill="#d8d0a8" stroke="#444"/><ellipse cx="28" cy="68" rx="21" ry="5" fill="#4a3418"/><g font-family="'Noto Sans CJK JP',sans-serif" font-size="6" fill="#222"><text x="44" y="14">俺</text><text x="44" y="24">つ</text><text x="44" y="34">し</text><text x="44" y="44">ま</text></g></svg></div>
<div class="t ttl" style="top:299.500px">Ore, Tsushima</div><div class="tag" style="left:862px;top:302px;width:20px">add</div>
<div class="t pl" style="top:300px">permalink</div>
<div class="a" style="left:788px;top:317px;width:577px;height:1px;background:#2e2e2e"></div>
<div class="box" style="top:318px;height:41px"></div>
<div class="t tx" style="top:322.500px">They both focus on a cat who does mischief to its owner, and they are short comedies</div>
<div class="t tx" style="top:340px">Recommended by <span class="l">EveAleon-88</span></div>
<div class="t rp" style="top:340px">report</div>
<div class="t l" style="left:788px;top:365px">Read recommendations by <b>1</b> more user</div>
<div class="sep" style="top:387px"></div>

<!-- rec 2 -->
<div class="thumb" style="left:730px;top:391px;width:58px;height:81px;background:#6ecfe8"><svg width="56" height="79" viewBox="0 0 56 79"><rect width="56" height="34" fill="#5cc8ea"/><rect y="34" width="56" height="45" fill="#d8eef6"/><ellipse cx="10" cy="28" rx="10" ry="6" fill="#fff"/><ellipse cx="44" cy="20" rx="12" ry="8" fill="#e8f6fa"/><rect x="20" y="3" width="24" height="10" fill="#9adcee"/><path d="M4 30c6-4 12 0 12 9l2 40H4z" fill="#7fb0c4"/><circle cx="11" cy="24" r="6" fill="#f8dcc8"/><path d="M5 23c1-8 12-8 13 0z" fill="#3a4a66"/><path d="M20 44c5-3 9 0 9 6l3 29H18z" fill="#33527a"/><circle cx="25" cy="40" r="4.500" fill="#f8dcc8"/><path d="M38 40c7-3 14 0 15 8l3 31H36z" fill="#f2b93a"/><circle cx="45" cy="32" r="7" fill="#fbe4d4"/><path d="M38 32c0-9 14-10 15 0z" fill="#e88a8a"/><circle cx="27" cy="22" r="4.500" fill="#fbe4d4"/><path d="M22 21c0-6 10-6 10 0z" fill="#333"/><path d="M22 27h10l2 12H20z" fill="#d8d8e8"/></svg></div>
<div class="t ttl" style="top:389.500px">Doukyonin wa Hiza, Tokidoki, Atama no Ue.</div><div class="tag" style="left:1007px;top:392px;width:19px">add</div>
<div class="t pl" style="top:390px">permalink</div>
<div class="a" style="left:788px;top:407px;width:577px;height:1px;background:#2e2e2e"></div>
<div class="box" style="top:408px;height:93px"></div>
<div class="t tx" style="top:411px">Cat Lovers Unite!!!</div>
<div class="t tx" style="top:424.500px">If you are an animal lover and a cat lover in particular then you will absolutely love both of these series.&nbsp; Both of these series</div>
<div class="t tx" style="top:437.500px">are great examples of what it is like to have a cat.&nbsp; Inu to Neko shows what it is like to have a cat from the human perspective,</div>
<div class="t tx" style="top:451px">while My Roommate is a Cat shows the life of a cat from the cat's perspective.</div>
<div class="t tx" style="top:465px">If you love animals, then you will absolutely love both series.</div>
<div class="t tx" style="top:483px">Recommended by <span class="l">skyhei1995</span></div>
<div class="t rp" style="top:483px">report</div>
<div class="t l" style="left:788px;top:506px">Read recommendations by <b>1</b> more user</div>
<div class="sep" style="top:527px"></div>
<div class="a" style="left:727px;top:576px;width:641px;height:1px;background:#e0e0e0"></div>

<!-- rec 3 -->
<div class="thumb" style="left:730px;top:579px;width:58px;height:82px;background:#123e96"><svg width="56" height="80" viewBox="0 0 56 80"><rect width="56" height="80" fill="#0f3f98"/><g fill="#dfe8f4"><rect x="2" y="6" width="8" height="14"/><rect x="12" y="3" width="9" height="12"/><rect x="22" y="6" width="9" height="15"/></g><rect x="12" y="17" width="7" height="7" fill="#d83a4a"/><rect x="42" y="4" width="10" height="18" fill="#3a66b8"/><path d="M20 35c0-10 17-10 17 0l-1 12H21z" fill="#f8e4d4"/><path d="M18 36c-1-15 22-15 21 0l-3-6H21z" fill="#2a1e1a"/><path d="M30 48c12-2 20 4 20 14l4 18H28z" fill="#2e8ed8"/><path d="M12 54c8-6 18-4 22 4l2 10-8 6H14z" fill="#b8b8c0"/><rect x="18" y="42" width="14" height="4" fill="#222"/><path d="M5 46c4-4 8-2 9 4l-2 10H6z" fill="#6ab858"/><rect y="72" width="40" height="8" fill="#1a1a24"/></svg></div>
<div class="t ttl" style="top:578px">Yoru wa Neko to Issho</div><div class="tag" style="left:904px;top:581px;width:19px">add</div>
<div class="t pl" style="top:578.500px">permalink</div>
<div class="a" style="left:788px;top:596px;width:577px;height:1px;background:#2e2e2e"></div>
<div class="box" style="top:597px;height:40px"></div>
<div class="t tx" style="top:600.500px">Super short, simply drawn sketches based on stereotypical memes about pets and owners.</div>
<div class="t tx" style="top:618.500px">Recommended by <span class="l">Nemo_Niemand</span></div>
<div class="t rp" style="top:618.500px">report</div>
<div class="sep" style="top:665px"></div>

<!-- rec 4 -->
<div class="a" style="left:730px;top:669px;width:58px;height:80px;overflow:hidden;background:#fff"><svg width="58" height="80" viewBox="0 0 58 80"><rect y="46" width="58" height="34" fill="#f6c8cc"/><path d="M14 26c6-4 14 0 14 8l2 26H12z" fill="#a8d4e2"/><circle cx="21" cy="19" r="6" fill="#f6dcc8"/><path d="M15 18c0-8 13-8 13 0z" fill="#5a3a28"/><path d="M30 26c8-3 14 0 14 8l-2 16H32z" fill="#e8e050"/><circle cx="37" cy="20" r="6" fill="#f6dcc8"/><path d="M31 19c0-8 13-8 13 0z" fill="#5a3a28"/><rect x="32" y="48" width="8" height="26" fill="#3a5a9c"/><rect x="16" y="58" width="8" height="16" fill="#222"/><rect x="24" y="44" width="6" height="10" fill="#e8d860"/><rect x="15" y="74" width="9" height="3" fill="#b8303a"/><rect x="32" y="74" width="9" height="3" fill="#b8303a"/><rect x="18" y="5" width="22" height="2" fill="#bbb"/></svg></div>
<div class="t ttl" style="top:667px">Honobono Log</div><div class="tag" style="left:862px;top:670px;width:20px">edit</div>
<div class="t pl" style="top:667.500px">permalink</div>
<div class="a" style="left:788px;top:685px;width:577px;height:1px;background:#2e2e2e"></div>
<div class="box" style="top:686px;height:54px"></div>
<div class="t tx" style="top:689.500px">You've most probably seen all these stereotypical meme comics about relations and about pets.</div>
<div class="t tx" style="top:703.500px">Both anime are short comedic sketches about relations with your dearest ones (lovers or pets respectively).</div>
<div class="t tx" style="top:721.500px">Recommended by <span class="l">Nemo_Niemand</span></div>
<div class="t rp" style="top:721.500px">report</div>
<div class="sep" style="top:754px"></div>

<!-- rec 5 -->
<div class="thumb" style="left:730px;top:757px;width:58px;height:82px;background:#bfe3f6"><svg width="56" height="80" viewBox="0 0 56 80"><rect width="56" height="80" fill="#bee4f6"/><path d="M42 10c10 16 6 32-14 38-10 3-18 0-22-6 14 4 26 0 30-12 2-6 2-14 0-20z" fill="#f4d838" stroke="#8a7420" stroke-width=".5"/><circle cx="40" cy="9" r="4" fill="#6a3a2a"/><ellipse cx="24" cy="33" rx="9" ry="7" fill="#f6d0a0"/><ellipse cx="36" cy="22" rx="7" ry="6" fill="#fff"/><circle cx="46" cy="50" r="5" fill="#d86060"/><circle cx="50" cy="52" r="4" fill="#8cb830"/><g font-family="'Noto Sans CJK JP',sans-serif" font-size="11" fill="#a8680e"><text x="5" y="68">ばなにゃ</text></g></svg></div>
<div class="t ttl" style="top:756px">Bananya</div><div class="tag" style="left:834px;top:758.500px;width:19px">add</div>
<div class="t pl" style="top:756.500px">permalink</div>
<div class="a" style="left:788px;top:774px;width:577px;height:1px;background:#2e2e2e"></div>
<div class="box" style="top:775px;height:40px"></div>
<div class="t tx" style="top:778.500px">Both are very cute shorts surrounding pets. However, there are no humans in Bananya unlike Inu to Neko.</div>
<div class="t tx" style="top:796.500px">Recommended by <span class="l">MarylandIzumiKun</span></div>
<div class="t rp" style="top:796.500px">report</div>
<div class="sep" style="top:843px"></div>

<!-- rec 6 -->
<div class="thumb" style="left:732px;top:847px;width:54px;height:80px;background:#e8f0f4"><svg width="52" height="78" viewBox="0 0 52 78"><rect width="52" height="78" fill="#e6eef2"/><path d="M0 16L40 3l2 7L2 24z" fill="#f0b840"/><circle cx="48" cy="6" r="3" fill="#f4c8c8"/><circle cx="48" cy="18" r="3" fill="#f4c8c8"/><circle cx="33" cy="28" r="6" fill="#f6dcc8"/><path d="M27 24c2-6 12-6 13 0z" fill="#d87090"/><path d="M25 34l14-2 5 14H23z" fill="#a46ac0"/><path d="M6 32l9 3-5 8z" fill="#333"/><path d="M13 26c5 0 7 4 6 10l-7 1z" fill="#e8c050"/><path d="M8 42c4 0 6 4 5 8l-7 0z" fill="#4a7ab8"/><ellipse cx="30" cy="68" rx="28" ry="22" fill="#f8c878"/><path d="M6 58l4-12 8 8zM46 50l-6 8-5-5z" fill="#f8c878" stroke="#c89040" stroke-width=".4"/><path d="M14 66h18M20 62v8" stroke="#c87030"/><circle cx="34" cy="74" r="3" fill="#f0a0a0"/></svg></div>
<div class="t ttl" style="top:845px">Poyopoyo Kansatsu Nikki</div><div class="tag" style="left:916px;top:848px;width:20px">add</div>
<div class="t pl" style="top:845.500px">permalink</div>
<div class="a" style="left:788px;top:863px;width:577px;height:1px;background:#2e2e2e"></div>
<div class="box" style="top:864px;height:53px"></div>
<div class="t tx" style="top:867.500px">Short episodes anime centered around domestic pets, despite looking like kid anime, the comedy in both shows can get pretty</div>
<div class="t tx" style="top:880.500px">adult at times.</div>
<div class="t tx" style="top:898.500px">Recommended by <span class="l">Punkero</span></div>
<div class="t rp" style="top:898.500px">report</div>
<div class="sep" style="top:932px"></div>

<!-- taskbar -->
<div class="a" style="left:0;top:1038px;width:1915px;height:39px;background:linear-gradient(90deg,#2f3d50 0,#34444e 20%,#3d4a4c 45%,#3d4547 70%,#3a4042 100%)"></div>
<svg class="a" style="left:16px;top:1050px" width="17" height="16" viewBox="0 0 17 16" fill="#fff"><path d="M0 2.300L7 1.300V7.500H0zM8 1.100L17 0v7.500H8zM0 8.500h7v6.200L0 13.700zM8 8.500h9V16l-9-1.200z"/></svg>
<div class="a" style="left:48px;top:1038px;width:288px;height:39px;background:#f2f2f2"></div>
<svg class="a" style="left:59px;top:1049px" width="17" height="17" viewBox="0 0 17 17" fill="none" stroke="#111" stroke-width="1.200"><circle cx="10.500" cy="6.500" r="5.500"/><path d="M6.500 10.500L1 16"/></svg>
<div class="t c" style="left:88px;top:1052.500px;font-size:14.600px;color:#222">Type here to search</div>
<svg class="a" style="left:351px;top:1049px" width="18" height="17" viewBox="0 0 18 17" fill="none" stroke="#fff" stroke-width="1.100"><path d="M0 1h9M0 16h9"/><rect x="1" y="4" width="10" height="9"/><rect x="14" y="1" width="3" height="3"/><rect x="14" y="6" width="3" height="3"/></svg>
<div class="a" style="left:387px;top:1038px;width:45px;height:39px;background:#55626f"></div>
<div class="a" style="left:387px;top:1075px;width:45px;height:2px;background:#9fc0f0"></div>
<svg class="a" style="left:399px;top:1046px" width="28" height="28" viewBox="0 0 28 28"><circle cx="11" cy="12" r="11" fill="#db4437"/><path d="M11 12L1 12A11 11 0 0 0 11 23z" fill="#0f9d58"/><path d="M11 12h11A11 11 0 0 1 11 23z" fill="#fbbc04"/><circle cx="11" cy="12" r="5" fill="#4285f4" stroke="#fff"/><circle cx="18" cy="19" r="9" fill="#0c0c0c"/><path d="M18 12l2 4h-4zM15.500 17l2 4h-4zM20.500 17l2 4h-4z" fill="#e8d030"/></svg>
<svg class="a" style="left:449px;top:1048px" width="21" height="20" viewBox="0 0 21 20"><path d="M0 2h8l2 2h11v15H0z" fill="#f8c83a"/><rect x="0" y="7" width="21" height="12" fill="#fbd860"/><rect x="7" y="11" width="7" height="8" fill="#2c98e8"/></svg>
<svg class="a" style="left:497px;top:1047px" width="22" height="22" viewBox="0 0 22 22"><circle cx="11" cy="11" r="10.500" fill="#2a2a2a" stroke="#ccc"/><circle cx="11" cy="11" r="3" fill="#ddd"/><path d="M8 4c-3 4-1 7 2 8M18 12c-4-2-7 0-8 3M6 17c1-5 4-6 7-5" stroke="#ddd" stroke-width="1.500" fill="none"/></svg>
<svg class="a" style="left:547px;top:1047px" width="22" height="24" viewBox="0 0 22 24"><path d="M11 1c3 0 5 5 8 12 2 4 2 9-3 9H6c-5 0-5-5-3-9C6 6 8 1 11 1z" fill="#3a3a44" stroke="#ccc"/><circle cx="11" cy="8" r="4" fill="#d03040"/><circle cx="7" cy="16" r="4" fill="#2c50d8"/><circle cx="15" cy="16" r="4" fill="#2cb040"/></svg>
<svg class="a" style="left:594px;top:1046px" width="24" height="26" viewBox="0 0 24 26"><rect width="24" height="26" fill="#eee"/><path d="M3 14L16 2l7 3v9L10 18z" fill="#222"/><rect x="3" y="8" width="8" height="8" fill="#c0a060" transform="rotate(-30 7 12)"/><rect y="19" width="24" height="7" fill="#222"/><text x="12" y="25" font-size="6" font-family="Liberation Sans" font-weight="bold" fill="#fff" text-anchor="middle">AmaRec</text></svg>
<svg class="a" style="left:645px;top:1046px" width="22" height="26" viewBox="0 0 22 26"><path d="M11 0c6 0 9 4 9 9 2 2 2 4 0 6v5c0 4-5 6-9 6s-9-2-9-6v-5c-2-2-2-4 0-6 0-5 3-9 9-9z" fill="#d8d818"/><rect x="4" y="9" width="5" height="3" fill="#333"/><rect x="13" y="9" width="5" height="3" fill="#333"/><path d="M6 16h10M6 19h10M9 15v7M13 15v7" stroke="#443"/></svg>
<svg class="a" style="left:694px;top:1046px" width="22" height="26" viewBox="0 0 22 26"><ellipse cx="11" cy="14" rx="8" ry="10" fill="#e0c820"/><circle cx="11" cy="12" r="5" fill="#c02020"/><circle cx="12" cy="12" r="2.500" fill="#f4e060"/><path d="M3 8L0 5M19 8l3-3M2 14H0M20 14h2M3 20l-3 3M19 20l3 3M8 3l-1-3M14 3l1-3" stroke="#b8a010" stroke-width="1.500"/></svg>
<svg class="a" style="left:743px;top:1047px" width="22" height="22" viewBox="0 0 22 22"><circle cx="11" cy="11" r="11" fill="#fff"/><circle cx="6.500" cy="11" r="2.300" fill="none" stroke="#4285f4" stroke-width="1.500"/><path d="M9.500 11h6" stroke="#fbbc04" stroke-width="1.500"/><rect x="16" y="9" width="2.500" height="4" fill="#34a853"/></svg>
<svg class="a" style="left:791px;top:1046px" width="24" height="24" viewBox="0 0 24 24"><rect width="24" height="24" fill="#b8b8b8"/><rect x="6" y="1" width="12" height="8" fill="#fff"/><rect x="6" y="13" width="12" height="8" fill="#000"/><rect x="6" y="9" width="12" height="4" fill="#e8e8e8"/></svg>
<svg class="a" style="left:840px;top:1046px" width="24" height="24" viewBox="0 0 24 24"><rect width="24" height="24" fill="#8a8a8a"/><rect x="6" y="1" width="12" height="8" fill="#fff"/><rect x="6" y="13" width="12" height="8" fill="#000"/><rect x="6" y="9" width="12" height="4" fill="#d8d8d8"/></svg>
<svg class="a" style="left:889px;top:1047px" width="24" height="22" viewBox="0 0 24 22"><path d="M1 18c3-2 3-2 5-4 0-6 2-11 8-11 4 0 5 3 5 7l4 2c-1 3-5 4-8 5-5 2-9 4-14 1z" fill="#6a4428"/><circle cx="9" cy="13" r="2" fill="#e8c8a0"/></svg>
<svg class="a" style="left:942px;top:1047px" width="15" height="22" viewBox="0 0 15 22"><path d="M0 0h10l5 5v17H0z" fill="#f4f4f4"/><path d="M10 0l5 5h-5z" fill="#ccc"/></svg>
<svg class="a" style="left:987px;top:1046px" width="25" height="24" viewBox="0 0 25 24"><rect width="25" height="24" fill="#e9541f"/><circle cx="12.500" cy="11" r="6" fill="none" stroke="#fff" stroke-width="1.800"/><circle cx="12.500" cy="11" r="2" fill="#fff"/></svg>
<svg class="a" style="left:1036px;top:1046px" width="24" height="24" viewBox="0 0 24 24"><circle cx="12" cy="12" r="12" fill="#1ed760"/><path d="M5 8c5-1.500 10-1 15 1.500M6 12c4-1 9-.8 12.500 1.400M7 16c3.500-.8 7-.5 10 1" stroke="#111" stroke-width="2" fill="none" stroke-linecap="round"/></svg>
<svg class="a" style="left:1085px;top:1046px" width="26" height="26" viewBox="0 0 26 26"><circle cx="12" cy="12" r="12" fill="#5865f2"/><path d="M6 9c4-2 8-2 12 0l1.500 8c-2 1-3 1.500-4 1.500l-1-2h-5l-1 2c-1 0-2-.5-4-1.500z" fill="#fff"/><circle cx="9.500" cy="13" r="1.500" fill="#5865f2"/><circle cx="14.500" cy="13" r="1.500" fill="#5865f2"/><circle cx="19" cy="20" r="6" fill="#ee5566"/><circle cx="19" cy="20" r="2.500" fill="#fff"/></svg>
<svg class="a" style="left:1135px;top:1046px" width="22" height="24" viewBox="0 0 22 24"><ellipse cx="11" cy="12" rx="10.500" ry="12" fill="#d8972a"/><ellipse cx="11" cy="12" rx="7" ry="9" fill="none" stroke="#7a5010"/><text x="11" y="17" font-size="13" font-family="Liberation Serif" font-weight="bold" text-anchor="middle" fill="#6a4408">P</text></svg>
<svg class="a" style="left:1183px;top:1047px" width="23" height="24" viewBox="0 0 23 24"><path d="M6 1l16 2-3 20-15-3z" fill="#cfe6e8" stroke="#8ab"/><path d="M6 10L4 20l15 3 1-6z" fill="#58b0b8"/></svg>
<div class="a" style="left:1028px;top:1075px;width:40px;height:2px;background:#9fc0f0"></div>
<div class="a" style="left:1077px;top:1075px;width:40px;height:2px;background:#9fc0f0"></div>
<div class="a" style="left:1126px;top:1075px;width:40px;height:2px;background:#9fc0f0"></div>
<div class="a" style="left:1175px;top:1075px;width:40px;height:2px;background:#9fc0f0"></div>
<!-- tray -->
<svg class="a" style="left:1500px;top:1044px" width="24" height="28" viewBox="0 0 24 28"><path d="M14 5a10 11 0 0 0 0 22 5 5 0 0 0 0-22z" fill="#f49a1a"/><path d="M8 24c0-4 2-6 4-6 0-3 8-3 8 0 3 0 4 3 4 6z" fill="#c8d8f0"/><circle cx="16" cy="7" r="6" fill="#d02828"/><text x="16" y="10" font-size="8" font-family="Liberation Sans" font-weight="bold" text-anchor="middle" fill="#fff">1</text></svg>
<svg class="a" style="left:1549px;top:1054px" width="12" height="8" fill="none" stroke="#fff" stroke-width="1.200"><path d="M1 7l5-6 5 6"/></svg>
<svg class="a" style="left:1573px;top:1049px" width="12" height="18" viewBox="0 0 12 18" fill="none" stroke="#fff" stroke-width="1.200"><rect x="1" y="3" width="8" height="12" rx="2"/><path d="M3 1h5M3 17h5M10 8v3"/></svg>
<svg class="a" style="left:1596px;top:1050px" width="16" height="16" viewBox="0 0 16 16"><path d="M1 13c-1-3 1-5 3-5 0-4 8-5 9-1 3 0 3 6 0 6z" fill="#1e88e0"/><path d="M3 1l11 14" stroke="#999"/></svg>
<svg class="a" style="left:1619px;top:1050px" width="16" height="16" viewBox="0 0 16 16"><path d="M1 13c-1-3 1-5 3-5 0-4 8-5 9-1 3 0 3 6 0 6z" fill="#e8e8e8"/></svg>
<svg class="a" style="left:1642px;top:1050px" width="16" height="16" viewBox="0 0 16 16"><path d="M1 13c-1-3 1-5 3-5 0-4 8-5 9-1 3 0 3 6 0 6z" fill="#1e88e0"/><path d="M3 1l11 14" stroke="#999"/></svg>
<svg class="a" style="left:1666px;top:1050px" width="16" height="16" viewBox="0 0 16 16"><path d="M1 13c-1-3 1-5 3-5 0-4 8-5 9-1 3 0 3 6 0 6z" fill="#aaa"/><path d="M3 1l11 14" stroke="#ddd"/></svg>
<svg class="a" style="left:1692px;top:1050px" width="16" height="16" viewBox="0 0 16 16" fill="none" stroke="#ddd" stroke-width="1.100"><path d="M2 15A13 13 0 0 1 15 2M5 15A10 10 0 0 1 15 5M8 15a7 7 0 0 1 7-7M11 15a4 4 0 0 1 4-4"/></svg>
<svg class="a" style="left:1714px;top:1050px" width="17" height="16" viewBox="0 0 17 16" fill="none" stroke="#eee" stroke-width="1.100"><path d="M1 6h3l4-4v12l-4-4H1zM11 5c1.500 2 1.500 4 0 6M13.500 3c2.500 3 2.500 7 0 10"/></svg>
<svg class="a" style="left:1741px;top:1049px" width="18" height="18" viewBox="0 0 18 18" fill="none" stroke="#eee" stroke-width="1.200"><path d="M1 17c3-3 2-5 5-8s8-7 10-6-3 8-6 10-4 2-9 4zM5 6l5 5"/></svg>
<div class="t c" style="left:1771px;top:1052px;font-size:12px;color:#fff">ENG</div>
<div class="t c" style="left:1814px;top:1041px;font-size:12px;color:#f0f0f0">6:06 PM</div>
<div class="t c" style="left:1809px;top:1060px;font-size:12px;color:#f0f0f0">6/16/2025</div>
<svg class="a" style="left:1878px;top:1049px" width="18" height="18" viewBox="0 0 18 18"><path d="M1 1h15v13H6l-3 3v-3H1z" fill="#f4f4f4"/><path d="M4 5h9M4 8h9M4 11h6" stroke="#555"/></svg>
</body></html>
